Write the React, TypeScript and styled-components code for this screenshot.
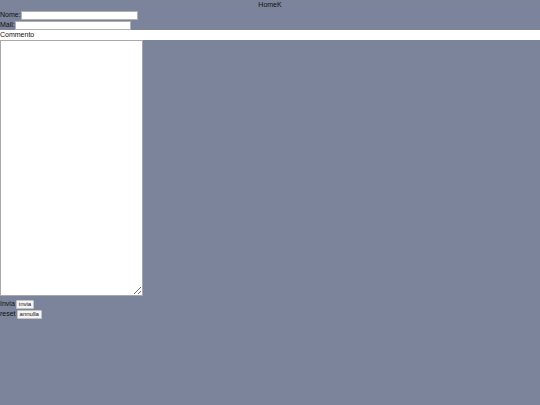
import styled, { createGlobalStyle } from 'styled-components';

const GlobalStyle = createGlobalStyle`
    html, body {
        margin: 0;
        padding: 0;
        background: #7b849b;
    }
    body {
        font-family: "Liberation Sans", Arial, sans-serif;
        font-size: 7px;
        color: #111;
        width: 540px;
        height: 405px;
        overflow: hidden;
    }
`;

const Page = styled.div`
    display: flex;
    flex-direction: column;
`;

const Title = styled.div`
    text-align: center;
    height: 10px;
    line-height: 9px;
`;

const Row = styled.div`
    display: flex;
    align-items: center;
    height: 10px;
    line-height: 10px;
    white-space: nowrap;
`;

const Label = styled.label`
    display: inline-block;
`;

const Field = styled.input<{ $width: number }>`
    box-sizing: border-box;
    width: ${({ $width }) => $width}px;
    height: 9px;
    margin: 0;
    padding: 0 2px;
    border: 1px solid #b0b0b0;
    background: #fff;
    font: inherit;
`;

const CommentBar = styled.div`
    background: #fff;
    height: 10px;
    line-height: 10px;
`;

const Comment = styled.textarea`
    box-sizing: border-box;
    display: block;
    width: 143px;
    height: 256px;
    margin: 0;
    padding: 1px;
    border: 1px solid #a8a8a8;
    background: #fff;
    font: inherit;
    resize: both;
`;

const Button = styled.button`
    box-sizing: border-box;
    height: 9px;
    margin: 0 0 0 1px;
    padding: 0 2px;
    border: 1px solid #c4c4c4;
    border-radius: 1px;
    background: #f4f4f4;
    color: #111;
    font: inherit;
    font-size: 6px;
    line-height: 7px;
`;

const Actions = styled.div`
    display: flex;
    flex-direction: column;
    padding-top: 3px;
`;

export default function App() {
    return (
        <>
            <GlobalStyle />
            <Page>
                <Title>HomeK</Title>
                <Row>
                    <Label>Nome:</Label>
                    <Field $width={117} type="text" />
                </Row>
                <Row>
                    <Label>Mail:</Label>
                    <Field $width={116} type="text" />
                </Row>
                <CommentBar>Commento</CommentBar>
                <Comment />
                <Actions>
                    <Row>
                        <Label>Invia</Label>
                        <Button type="submit">invia</Button>
                    </Row>
                    <Row>
                        <Label>reset</Label>
                        <Button type="reset">annulla</Button>
                    </Row>
                </Actions>
            </Page>
        </>
    );
}
